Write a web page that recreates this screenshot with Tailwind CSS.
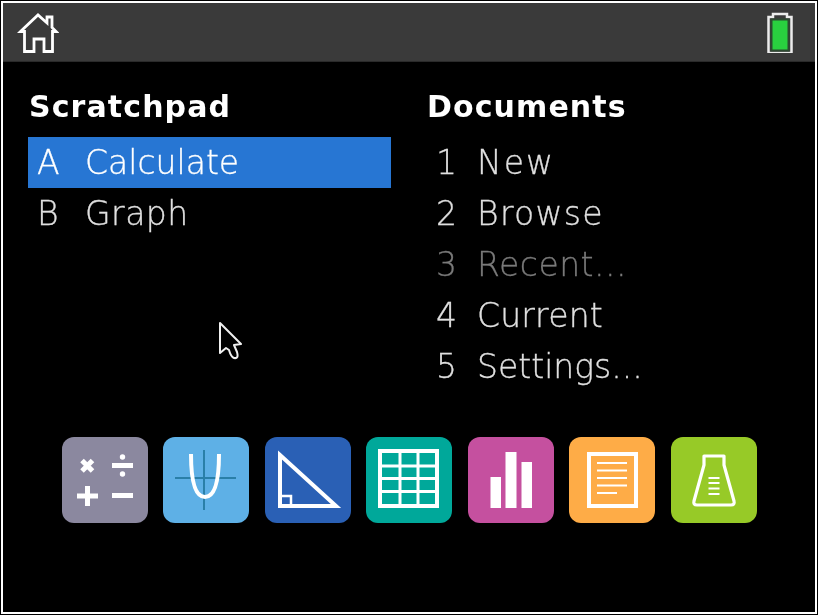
<!doctype html>
<html><head><meta charset="utf-8"><script src="https://cdn.jsdelivr.net/npm/@tailwindcss/browser@4"></script></head>
<body class="bg-black">
<div class="w-[818px] h-[615px] bg-black p-px overflow-hidden font-['DejaVu_Sans',sans-serif]">
<div class="w-[816px] h-[613px] border-2 border-white flex flex-col bg-black">
  <header class="h-[59px] shrink-0 bg-[#3a3a3a] border-b border-[#2a2a2a] flex items-center justify-between pl-[14px] pr-[22px] pb-[1px]">
    <svg class="w-[42px] h-[42px] blur-[0.5px]" viewBox="0 0 42 42" fill="none" stroke="#fff" stroke-width="2.800" stroke-linejoin="miter"><path d="M3.500 20.500L21 4L30 12V6H35V16.500L39 20.500H35.500V40.500H27V28H17V40.500H7.500V20.500Z"/></svg>
    <svg class="w-[26px] h-[42px] blur-[0.4px]" viewBox="0 0 26 42"><path d="M6 3H20V6H24.500V42H1.500V6H6Z" fill="#3a3a3a" stroke="#ececec" stroke-width="2.500"/><rect x="4.500" y="8.500" width="17" height="31" fill="#29d03f" stroke="#2c4a30" stroke-width="2"/></svg>
  </header>
  <main class="flex pl-[25px] pt-[23px] text-[#e0e0e0] text-[33px] font-extralight leading-[51px] [-webkit-text-stroke:0.3px_currentColor] blur-[0.4px]">
    <section class="w-[398px] shrink-0">
      <h2 class="h-[52px] pl-[1px] text-white text-[30px] leading-[44px] font-bold tracking-[1.1px] [-webkit-text-stroke:0]">Scratchpad</h2>
      <div class="w-[363px] h-[51px] bg-[#2776d3] text-white flex"><span class="w-[57px] pl-[9px]">A</span><span>Calculate</span></div>
      <div class="flex"><span class="w-[57px] pl-[9px]">B</span><span class="tracking-[0.5px]">Graph</span></div>
    </section>
    <section>
      <h2 class="h-[52px] pl-[1px] text-white text-[30px] leading-[44px] font-bold tracking-[1.1px] [-webkit-text-stroke:0]">Documents</h2>
      <div class="flex"><span class="w-[51px] pl-[10px]">1</span><span class="tracking-[2px]">New</span></div>
      <div class="flex"><span class="w-[51px] pl-[10px]">2</span><span class="tracking-[1.3px]">Browse</span></div>
      <div class="flex text-[#7a7a7a]"><span class="w-[51px] pl-[10px]">3</span><span class="tracking-[0.5px]">Recent...</span></div>
      <div class="flex"><span class="w-[51px] pl-[10px]">4</span><span class="tracking-[0.2px]">Current</span></div>
      <div class="flex"><span class="w-[51px] pl-[10px]">5</span><span>Settings...</span></div>
    </section>
  </main>
  <div class="relative flex gap-[15.600px] pl-[58.500px] pt-[45px]">
    <svg class="absolute left-[214px] top-[-71px] w-[28px] h-[42px] blur-[0.4px]" viewBox="0 0 28 42" fill="#000" stroke="#f0f0f0" stroke-width="2" stroke-linejoin="round"><path d="M3 2L24 23L17 24L20 31Q22 38 17 37Q14 36 12 29L9 27L3 32Z"/></svg>

    <div class="w-[86px] h-[86px] rounded-[12px] bg-[#8b889f] blur-[0.4px]"><svg viewBox="0 0 86 86" class="w-full h-full" stroke="#fff" stroke-width="5" fill="#fff"><path d="M20 23.500L30.500 34M30.500 23.500L20 34M15 59H36M25.500 49V69M50 28.500H71M50 58.500H71" fill="none"/><circle cx="60.500" cy="20" r="2.700" stroke="none"/><circle cx="60.500" cy="37" r="2.700" stroke="none"/></svg></div>

    <div class="w-[86px] h-[86px] rounded-[12px] bg-[#5eb0e6] blur-[0.4px]"><svg viewBox="0 0 86 86" class="w-full h-full" fill="none"><path d="M12 41H73M41 13V73" stroke="#2a7fa8" stroke-width="2"/><path d="M28 17C28 44 32 60 42 60C52 60 56 44 56 17" stroke="#fff" stroke-width="4"/></svg></div>

    <div class="w-[86px] h-[86px] rounded-[12px] bg-[#2a60b5] blur-[0.4px]"><svg viewBox="0 0 86 86" class="w-full h-full" fill="none" stroke="#fff"><path d="M15 18L71 69H15Z" stroke-width="4" stroke-linejoin="miter"/><path d="M15 59H26V69" stroke-width="2.500"/></svg></div>

    <div class="w-[86px] h-[86px] rounded-[12px] bg-[#00a89a] blur-[0.4px]"><svg viewBox="0 0 86 86" class="w-full h-full" fill="none" stroke="#fff"><rect x="14" y="14" width="57" height="55" stroke-width="4"/><path d="M34 14V69M52 14V69M14 29H71M14 41.500H71M14 54.500H71" stroke-width="3"/></svg></div>

    <div class="w-[86px] h-[86px] rounded-[12px] bg-[#c5509f] blur-[0.4px]"><svg viewBox="0 0 86 86" class="w-full h-full" fill="#fff"><rect x="22.500" y="40" width="10.500" height="31"/><rect x="37.500" y="15" width="11" height="56"/><rect x="53.500" y="25" width="10.500" height="46"/></svg></div>

    <div class="w-[86px] h-[86px] rounded-[12px] bg-[#feac47] blur-[0.4px]"><svg viewBox="0 0 86 86" class="w-full h-full" fill="none" stroke="#fff"><rect x="20" y="17" width="47" height="52" stroke-width="4"/><path d="M28 26H58M28 33.500H58M28 41H58M28 48.500H58M28 56H48" stroke-width="2.200"/></svg></div>

    <div class="w-[86px] h-[86px] rounded-[12px] bg-[#97ca27] blur-[0.4px]"><svg viewBox="0 0 86 86" class="w-full h-full" fill="none" stroke="#fff"><path d="M33 19H53V28L63 64Q64 68 60 68H26Q22 68 23 64L33 28Z" stroke-width="3.200" stroke-linejoin="round"/><path d="M37.500 41H48.500M37.500 46H48.500M37.500 51.500H48.500M37.500 57H48.500" stroke-width="2.200"/></svg></div>
  </div>
</div>
</div>
</body></html>
